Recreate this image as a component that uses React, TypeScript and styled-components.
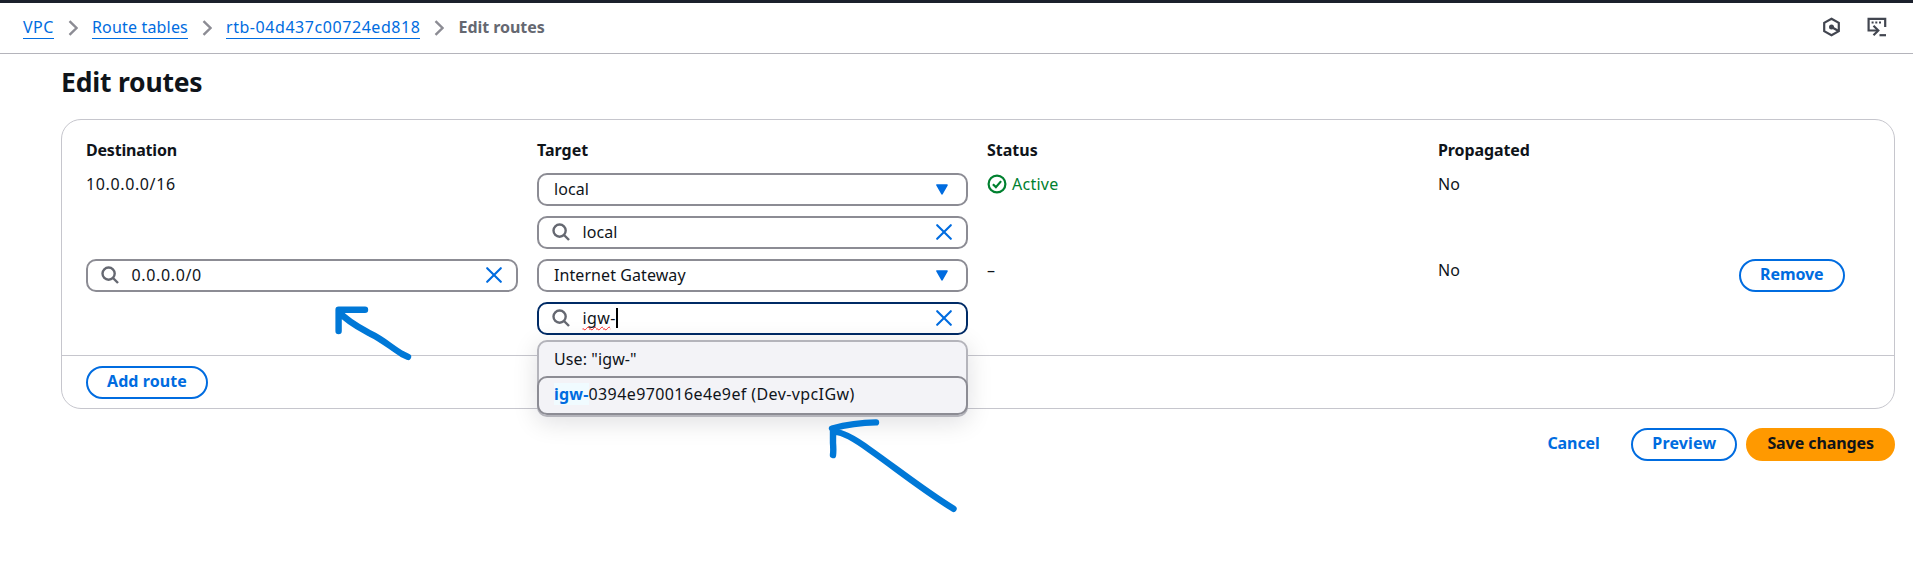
import React from 'react';
import styled, { createGlobalStyle, css } from 'styled-components';

const blue = '#006ce0';
const ink = '#0f141a';

const GlobalStyle = createGlobalStyle`
  * { box-sizing: border-box; }
  body {
    margin: 0;
    background: #fff;
    color: ${ink};
    font-family: "Noto Sans", "Open Sans", sans-serif;
    font-size: 16px;
    line-height: 22px;
  }
`;

const Page = styled.div`
  position: relative;
  height: 582px;
  overflow: hidden;
`;

const Header = styled.header`
  display: flex;
  align-items: center;
  justify-content: space-between;
  height: 54px;
  padding: 0 26px 0 23px;
  border-top: 3px solid #1b202c;
  border-bottom: 1px solid #b4b4bb;
`;

const Breadcrumbs = styled.nav`
  display: flex;
  align-items: center;
  gap: 14px;
`;

const Text = styled.span<{ $track?: number }>`
  letter-spacing: ${({ $track = 0 }) => $track}px;
  white-space: pre;
`;

const Crumb = styled.a<{ $track?: number }>`
  height: 22px;
  line-height: 20px;
  padding-bottom: 1px;
  border-bottom: 1px solid ${blue};
  color: ${blue};
  letter-spacing: ${({ $track = 0 }) => $track}px;
  white-space: nowrap;
`;

const CurrentCrumb = styled.span`
  color: #656871;
  font-weight: 700;
  letter-spacing: -0.05px;
  line-height: 21px;
  padding-bottom: 1px;
`;

const HeaderTools = styled.div`
  display: flex;
  align-items: center;
  gap: 26px;
  padding-bottom: 2px;
`;

const Svg = styled.svg`
  display: block;
  flex: none;
  fill: none;
`;

const Main = styled.main`
  padding: 10px 18px 0 61px;
`;

const Title = styled.h1`
  margin: 0 0 19px;
  font-size: 26.5px;
  font-weight: 700;
  line-height: 36px;
  letter-spacing: -0.2px;
`;

const Card = styled.section`
  border: 1px solid #c6c6cd;
  border-radius: 20px;
`;

const Routes = styled.div`
  padding: 18px 24px 20px;
`;

const Row = styled.div`
  display: grid;
  grid-template-columns: 432px 431px 432px 282px auto;
  column-gap: 19px;
  align-items: start;
  justify-content: start;
  & + & { margin-top: 10px; }
`;

const HeadRow = styled(Row)`
  height: 25px;
  font-weight: 700;
  line-height: 25px;
`;

const Stack = styled.div`
  display: grid;
  gap: 10px;
`;

const Field = styled.div<{ $focused?: boolean }>`
  display: flex;
  align-items: center;
  height: 33px;
  padding: 0 14px 1px 13px;
  border: 2px solid ${({ $focused }) => ($focused ? '#002b66' : '#8c8c94')};
  border-radius: 10px;
  background: #fff;
  & > svg:last-child { margin-left: auto; }
`;

const SelectField = styled(Field)`
  padding: 0 18px 1px 15px;
`;

const SearchText = styled(Text)`
  margin-left: 12.5px;
`;

const Misspelled = styled.span`
  text-decoration: underline wavy #f22 1px;
  text-underline-offset: 2px;
  text-decoration-skip-ink: none;
`;

const Caret = styled.i`
  display: inline-block;
  width: 2px;
  height: 20px;
  margin-left: 0;
  vertical-align: -4px;
  background: #000;
`;

const Status = styled.span`
  display: flex;
  align-items: center;
  gap: 5px;
  color: #00802f;
`;

const FieldAnchor = styled.div`
  position: relative;
`;

const Menu = styled.div`
  position: absolute;
  z-index: 2;
  top: 38px;
  left: 0;
  right: 0;
  height: 77px;
  border: 2px solid #b4b4bb;
  border-radius: 10px;
  background: #f3f3f7;
  box-shadow: 0 5px 25px 1px rgba(0, 7, 22, 0.12);
`;

const Option = styled.div<{ $active?: boolean }>`
  height: 34px;
  padding: 6px 15px;
  ${({ $active }) =>
    $active &&
    css`
      height: 39px;
      margin: 0 -2px;
      padding: 5px 15px;
      border: 2px solid #8c8c94;
      border-radius: 10px;
    `}
`;

const Match = styled.span`
  background: #f0fbff;
  color: ${blue};
  font-weight: 700;
  letter-spacing: 0.2px;
`;

const Button = styled.button<{ $kind?: 'normal' | 'primary' | 'link'; $track?: number }>`
  height: 33px;
  padding: 0 19px 2px;
  border: 2px solid ${blue};
  border-radius: 17px;
  background: #fff;
  color: ${blue};
  font: 700 16px/23px "Noto Sans", "Open Sans", sans-serif;
  letter-spacing: ${({ $track = -0.08 }) => $track}px;
  white-space: nowrap;
  ${({ $kind }) => $kind === 'primary' && css`border-color: #ff9900; background: #ff9900; color: ${ink};`}
  ${({ $kind }) => $kind === 'link' && css`border-color: transparent; padding-right: 20.5px;`}
`;

const CardFooter = styled.footer`
  display: flex;
  align-items: center;
  height: 53px;
  padding: 0 24px;
  border-top: 1px solid #c6c6cd;
`;

const Actions = styled.div`
  display: flex;
  justify-content: flex-end;
  gap: 9px;
  margin-top: 19px;
`;

const Annotations = styled.svg`
  position: absolute;
  z-index: 3;
  inset: 0;
  pointer-events: none;
  fill: none;
  stroke: #0078d7;
  stroke-width: 6.4;
  stroke-linecap: round;
  stroke-linejoin: round;
`;

const Chevron = () => (
  <Svg width="10" height="16" stroke="#8c8c94" strokeWidth="2.4">
    <path d="M1.5 1.2 8.5 8l-7 6.8" />
  </Svg>
);

const SearchIcon = () => (
  <Svg width="18" height="18" stroke="#656871" strokeWidth="2.4">
    <circle cx="7.6" cy="7.6" r="6.1" />
    <path d="m12 12 5 5" />
  </Svg>
);

const ClearIcon = () => (
  <Svg width="16" height="16" stroke={blue} strokeWidth="2.1" strokeLinecap="round">
    <path d="m1.2 1.2 13.6 13.6M14.8 1.2 1.2 14.8" />
  </Svg>
);

const Triangle = () => (
  <Svg width="12" height="11">
    <path d="M1 1h10L6 9.8z" fill={blue} stroke={blue} strokeWidth="1.6" strokeLinejoin="round" />
  </Svg>
);

const CheckIcon = () => (
  <Svg width="20" height="20" stroke="#00802f" strokeWidth="2.2">
    <circle cx="10" cy="10" r="8.4" />
    <path d="m5.9 10.3 3 2.8 5.2-6" />
  </Svg>
);

const HexIcon = () => (
  <Svg width="18" height="20" stroke="#424650" strokeWidth="2.2">
    <path d="M8.5 1.8 15.8 5.8v8.4L8.5 18.2 1.2 14.2V5.8z" />
    <path d="m8.5 10 7 4" />
    <circle cx="8.5" cy="10" r="2.5" fill="#424650" stroke="none" />
  </Svg>
);

const ShellIcon = () => (
  <Svg width="20" height="20" stroke="#424650" strokeWidth="2.2">
    <path d="M18.2 10V1.9H1.6v11.6h9" />
    <path d="m6.5 8.7 4.8 4.8-4.8 4.8" />
    <path d="M12.5 18.2H19" />
    <path d="M4.6 5.4h10" strokeDasharray="2 1.7" strokeWidth="2" />
  </Svg>
);

const Search = ({ value, track, focused }: { value: React.ReactNode; track?: number; focused?: boolean }) => (
  <Field $focused={focused}>
    <SearchIcon />
    <SearchText $track={track}>{value}</SearchText>
    <ClearIcon />
  </Field>
);

const Select = ({ value }: { value: string }) => (
  <SelectField>
    <Text $track={0.08}>{value}</Text>
    <Triangle />
  </SelectField>
);

export default function App() {
  return (
    <Page>
      <GlobalStyle />
      <Header>
        <Breadcrumbs>
          <Crumb $track={0.5}>VPC</Crumb>
          <Chevron />
          <Crumb $track={0.18}>Route tables</Crumb>
          <Chevron />
          <Crumb $track={0.56}>rtb-04d437c00724ed818</Crumb>
          <Chevron />
          <CurrentCrumb>Edit routes</CurrentCrumb>
        </Breadcrumbs>
        <HeaderTools>
          <HexIcon />
          <ShellIcon />
        </HeaderTools>
      </Header>
      <Main>
        <Title>Edit routes</Title>
        <Card>
          <Routes>
            <HeadRow>
              <Text $track={-0.2}>Destination</Text>
              <Text>Target</Text>
              <Text>Status</Text>
              <Text $track={-0.1}>Propagated</Text>
            </HeadRow>
            <Row>
              <Text $track={0.62}>10.0.0.0/16</Text>
              <Stack>
                <Select value="local" />
                <Search value="local" track={0.1} />
              </Stack>
              <Status>
                <CheckIcon />
                <Text $track={0.25}>Active</Text>
              </Status>
              <Text>No</Text>
            </Row>
            <Row>
              <Search value="0.0.0.0/0" track={0.65} />
              <Stack>
                <Select value="Internet Gateway" />
                <FieldAnchor>
                  <Search
                    focused
                    track={0.4}
                    value={<><Misspelled>igw</Misspelled>-<Caret /></>}
                  />
                  <Menu>
                    <Option><Text $track={0.1}>Use: "igw-"</Text></Option>
                    <Option $active>
                      <Match>igw-</Match>
                      <Text $track={0.4}>0394e970016e4e9ef (Dev-vpcIGw)</Text>
                    </Option>
                  </Menu>
                </FieldAnchor>
              </Stack>
              <Text>–</Text>
              <Text>No</Text>
              <Button>Remove</Button>
            </Row>
          </Routes>
          <CardFooter>
            <Button $track={0.08}>Add route</Button>
          </CardFooter>
        </Card>
        <Actions>
          <Button $kind="link">Cancel</Button>
          <Button $track={0.18}>Preview</Button>
          <Button $kind="primary">Save changes</Button>
        </Actions>
      </Main>
      <Annotations width="1913" height="582">
        <path d="M365 309.8H338.6V331M339 312C348 322 360 328 370 333.5C382 339 392 348 402 354L408 356.8" />
        <path d="M876 422.4C861 422.6 845 425 832 428.5M833 432V443Q833.6 450 833 455M833 432C842 431 855 439 870 450C897 469 923 490 953.5 508.8" />
      </Annotations>
    </Page>
  );
}
